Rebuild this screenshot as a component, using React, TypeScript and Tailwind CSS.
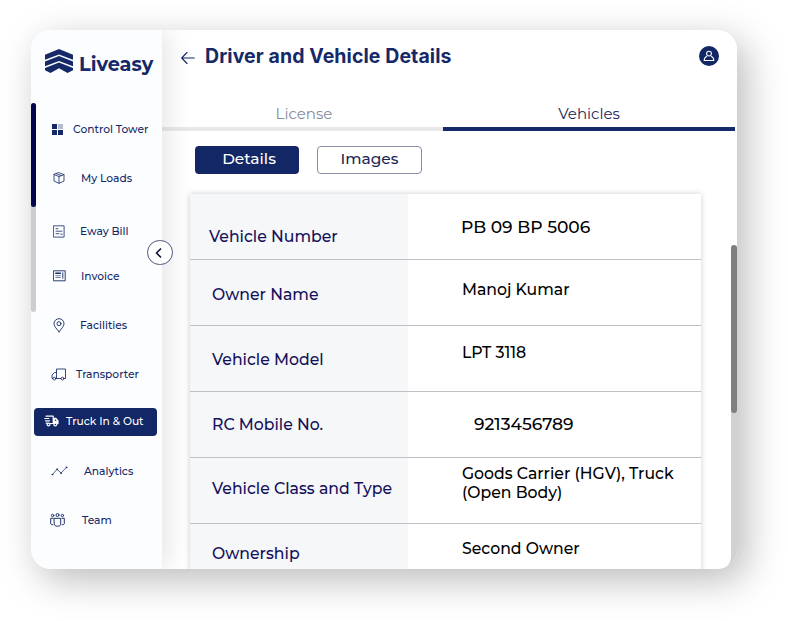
import type { ReactNode } from "react";

type SvgProps = { className: string; box: string; children: ReactNode; width?: number };

function Icon({ className, box, children, width = 1 }: SvgProps) {
  return (
    <svg className={"shrink-0 " + className} viewBox={box} fill="none" stroke="currentColor" strokeWidth={width} strokeLinecap="round" strokeLinejoin="round">
      {children}
    </svg>
  );
}

const tower = (
  <svg className="h-[11px] w-[11px] shrink-0" viewBox="0 0 11 11" fill="#152968">
    <rect width="5" height="5" />
    <rect x="6" width="5" height="5" opacity=".3" />
    <rect y="6" width="5" height="5" />
    <rect x="6" y="6" width="5" height="5" />
  </svg>
);
const cube = (
  <Icon className="h-[12px] w-[12px]" box="0 0 12 12" width={0.8}>
    <path d="M6 .7 11 2.6v6.5L6 11.3 1 9.100V2.600ZM1 2.600 6 4.500l5-1.900M6 4.500v6.800M3.400 1.700l5 1.900" />
  </Icon>
);
const bill = (
  <Icon className="h-[13px] w-[12px]" box="0 0 12 13" width={0.8}>
    <path d="M.8.800h10.300v11.300H.8ZM3 3.700h2M3 6.200h6M3 8.700h3M7.800 9.200h1.500" />
  </Icon>
);
const invoice = (
  <Icon className="h-[12px] w-[13px]" box="0 0 13 12" width={0.9}>
    <path d="M.8.800h11.400v10H.8ZM9.800 2.800v5.500" />
    <path d="M2.800 5.700h4.500M2.800 7.500h4.500" strokeWidth=".6" />
    <path d="M2.800 3.200h4.500" strokeWidth="1.600" />
  </Icon>
);
const pin = (
  <Icon className="h-[15px] w-[12px]" box="0 0 12 15" width={0.9}>
    <path d="M6 13.800C4 11 1 8.600 1 5.700a5 5 0 0 1 10 0C11 8.600 8 11 6 13.800Z" />
    <circle cx="6" cy="5.700" r="2" />
  </Icon>
);
const lorry = (
  <Icon className="h-[13px] w-[16px]" box="0 0 16 13" width={0.85}>
    <path d="M5.500 10.500V1h9v9.500h-1.300M9.800 10.500H4.800M5.500 4.500H3.700L1 7v3.500h.800" />
    <circle cx="3.300" cy="10.600" r="1.400" />
    <circle cx="11.500" cy="10.600" r="1.400" />
  </Icon>
);
const fastTruck = (
  <Icon className="h-[12px] w-[15px]" box="0 0 15 12" width={1.2}>
    <path d="M2 1.200h7.200v7.300H6M.8 3.500h4M1.500 5.800h4M2.200 8.200h1" />
    <path d="M9.600 3.300h2.300L14 5.900v2.700H9.600Z" fill="currentColor" />
    <path d="M10.800 4.400h.8l1 1.300h-1.800Z" fill="#132665" stroke="none" />
    <circle cx="4.500" cy="9.500" r="1.400" fill="#132665" />
    <circle cx="11.300" cy="9.500" r="1.400" fill="#132665" />
  </Icon>
);
const trend = (
  <Icon className="h-[10px] w-[17px]" box="0 0 17 10" width={0.75}>
    <path d="M1.500 8.500 6 3.300 10 7l5.300-5.500" />
    <circle cx="1.300" cy="8.600" r=".5" />
    <circle cx="6" cy="3.200" r=".5" />
    <circle cx="10" cy="7.200" r=".5" />
    <circle cx="15.400" cy="1.300" r=".5" />
  </Icon>
);
const team = (
  <Icon className="h-[14px] w-[15px]" box="0 0 15 14" width={0.95}>
    <circle cx="2.600" cy="2.500" r="1.200" />
    <circle cx="7.500" cy="2" r="1.500" />
    <circle cx="12.400" cy="2.500" r="1.200" />
    <path d="M4.300 5.300h6.400v6c0 1-1 1.900-3.200 1.900s-3.200-.9-3.200-1.900ZM3 5.300H.7v5.200c0 .8.800 1.300 2.200 1.300M12 5.300h2.300v5.200c0 .8-.8 1.300-2.200 1.300" />
  </Icon>
);

const items = [
  { label: "Control Tower", icon: tower, row: "pl-[16px]", gap: "w-[21px]" },
  { label: "My Loads", icon: cube, row: "mt-[21px] pl-[17px]", gap: "w-[28px]" },
  { label: "Eway Bill", icon: bill, row: "mt-[25px] pl-[17px]", gap: "w-[27px]" },
  { label: "Invoice", icon: invoice, row: "mt-[17px] pl-[17px]", gap: "w-[28px]" },
  { label: "Facilities", icon: pin, row: "mt-[21px] pl-[17px]", gap: "w-[27px]" },
  { label: "Transporter", icon: lorry, row: "mt-[21px] pl-[15px]", gap: "w-[25px]" },
  { label: "Truck In & Out", icon: fastTruck, row: "mt-[20px] ml-[-2px] w-[123px] rounded-[4px] bg-[#132665] pb-[2px] pl-[10px] text-white", gap: "w-[22px]" },
  { label: "Analytics", icon: trend, row: "mt-[21px] pl-[15px]", gap: "w-[33px]" },
  { label: "Team", icon: team, row: "mt-[21px] pl-[14px]", gap: "w-[32px]" },
];

const rows = [
  { label: "Vehicle Number", lc: "pl-[18px] pt-[33px]", value: "PB 09 BP 5006", vc: "pl-[52px] pt-[23px] text-[17.1px]" },
  { label: "Owner Name", lc: "pl-[21px] pt-[25px]", value: "Manoj Kumar", vc: "pl-[53px] pt-[20px]" },
  { label: "Vehicle Model", lc: "pl-[21px] pt-[24px]", value: "LPT 3118", vc: "pl-[53px] pt-[17px]" },
  { label: "RC Mobile No.", lc: "pl-[21px] pt-[23px]", value: "9213456789", vc: "pl-[65px] pt-[22px] text-[17.1px]" },
  { label: "Vehicle Class and Type", lc: "pl-[21px] pt-[21px]", value: "Goods Carrier (HGV), Truck (Open Body)", vc: "pl-[53px] pt-[6px]" },
  { label: "Ownership", lc: "pl-[21px] pt-[20px]", value: "Second Owner", vc: "pl-[53px] pt-[15px]" },
];

function Sidebar() {
  return (
    <aside className="relative z-10 flex h-full w-[131px] shrink-0 bg-[#fcfdfe] shadow-[6px_0_24px_rgba(0,0,0,0.1)]">
      <div className="mt-[73px] h-[209px] w-[5px] shrink-0 rounded-[3px] bg-[#cfcccd]">
        <div className="h-[104px] w-[5px] rounded-[3px] bg-[#05054f]" />
      </div>
      <div className="flex w-[126px] shrink-0 flex-col text-[#152968]">
        <div className="flex h-[85px] items-start pl-[9px] pt-[19px]">
          <svg className="h-[24px] w-[28px] shrink-0" viewBox="0 0 28 24" fill="#152968">
            <path d="M0 5.700 14 0l14 5.700v5.100L14 5.400 0 10.800Z" />
            <path d="M0 12.400 14 7l14 5.400v4.900L14 12 0 17.300Z" />
            <path d="M0 18.900 14 13.600l14 5.300v2.300L22.500 24 14 19.300 5.500 24 0 21.200Z" />
          </svg>
          <span className="ml-[6px] mt-px text-[19.3px] leading-[28px] font-bold">Liveasy</span>
        </div>
        <nav className="flex flex-col">
          {items.map((it) => (
            <div key={it.label} className={"flex h-[28px] items-center whitespace-nowrap " + it.row}>
              <span className={"flex shrink-0 " + it.gap}>{it.icon}</span>
              <span className="pt-[2px] text-[10.700px] leading-[14px] font-medium">{it.label}</span>
            </div>
          ))}
        </nav>
      </div>
      <button className="absolute left-[116px] top-[210px] flex h-[25px] w-[26px] items-center justify-center rounded-full border border-[#4c567d] bg-white">
        <Icon className="mr-[3px] h-[10px] w-[7px] text-[#10183f]" box="0 0 7 10" width={1.7}>
          <path d="M5.500 1 1.500 5l4 4" />
        </Icon>
      </button>
    </aside>
  );
}

export default function App() {
  return (
    <div className="h-[621px] w-[788px] overflow-hidden bg-white pl-[31px] pt-[30px] font-['Montserrat','Inter',sans-serif]">
      <div className="h-[539px] w-[706px] rounded-[20px] shadow-[9px_11px_38px_0_rgba(0,0,0,0.27)]">
        <div className="flex h-full overflow-hidden rounded-[20px] bg-[linear-gradient(to_bottom,#fff_70%,#d2d0d0_71%)]">
          <div className="flex h-full w-[700px] shrink-0 rounded-br-[12px] bg-white">
            <Sidebar />
            <main className="flex w-[569px] shrink-0 flex-col">
              <header className="flex h-[52px] shrink-0 items-center pl-[19px] text-[#152968]">
                <Icon className="mt-[3px] h-[14px] w-[14px]" box="0 0 14 14" width={1.1}>
                  <path d="M13.300 7H.700M6 1.500.700 7 6 12.500" />
                </Icon>
                <h1 className="ml-[10px] w-[494px] shrink-0 whitespace-nowrap font-['Inter'] text-[19.500px] leading-[26px] font-bold tracking-[0.08px]">Driver and Vehicle Details</h1>
                <span className="flex h-[20px] w-[20px] shrink-0 items-center justify-center rounded-full bg-[#132665] text-white">
                  <Icon className="h-[12px] w-[12px]" box="0 0 12 12" width={1.1}>
                    <circle cx="6" cy="3.600" r="2.400" />
                    <path d="M3.600 6.500C2 7.200 1.200 8.300 1.200 10.500h9.600c0-2.200-.8-3.300-2.400-4" />
                  </Icon>
                </span>
              </header>
              <div className="flex h-[49px] shrink-0 text-[15px]">
                <div className="flex w-[281px] shrink-0 items-end justify-center border-b-4 border-[#e9e9ea] pb-[3px] pl-[3px] leading-[20px] text-[#858b9d]">License</div>
                <div className="flex w-[292px] shrink-0 items-end justify-center border-b-4 border-[#152968] pb-[3px] leading-[20px] text-[#1b2757]">Vehicles</div>
              </div>
              <div className="mt-[15px] flex h-[28px] shrink-0 gap-[18px] pl-[33px] text-[15.400px] leading-[20px]">
                <button className="w-[104px] rounded-[4px] bg-[#132665] pb-[2px] pl-[4px] font-medium text-white">Details</button>
                <button className="w-[105px] rounded-[4px] border border-[#8a90a5] pb-[2px] font-medium text-[#1b2757]">Images</button>
              </div>
              <section className="ml-[28px] mt-[20px] w-[511px] shrink-0 bg-[linear-gradient(to_right,#f5f7f9_218px,#fff_218px)] text-[15.700px] shadow-[0_0_6px_rgba(0,0,0,0.2)]">
                {rows.map((r) => (
                  <div key={r.label} className="flex h-[66px] border-b border-[#bfc0c4] pl-px leading-[19px] font-medium">
                    <div className={"w-[218px] shrink-0 whitespace-nowrap text-[#15105a] " + r.lc}>{r.label}</div>
                    <div className={"w-[285px] shrink-0 text-black " + r.vc}>{r.value}</div>
                  </div>
                ))}
              </section>
            </main>
          </div>
          <div className="w-[6px] shrink-0 pt-[215px]">
            <div className="h-[168px] w-[6px] rounded-[3px] bg-[#807e7f]" />
          </div>
        </div>
      </div>
    </div>
  );
}
